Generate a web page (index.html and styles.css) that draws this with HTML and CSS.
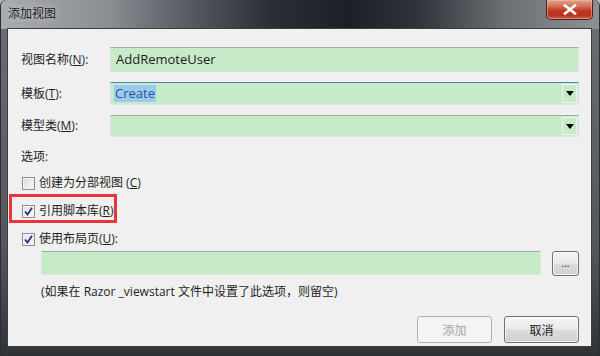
FILE: index.html
```html
<!DOCTYPE html>
<html>
<head>
<meta charset="utf-8">
<link rel="stylesheet" href="styles.css">
</head>
<body>
<div class="window">
  <div class="titlebar">
    <span class="title">添加视图</span>
    <div class="close">
      <svg width="14" height="11" viewBox="0 0 14 11"><path d="M2 1.5 L12 9.5 M12 1.5 L2 9.5" stroke="#fff" stroke-width="2.6" stroke-linecap="square" fill="none"/></svg>
    </div>
  </div>
  <div class="client">
    <div class="row row-name">
      <span class="label">视图名称(<u>N</u>):</span>
      <div class="textbox">AddRemoteUser</div>
    </div>
    <div class="row row-combo">
      <span class="label">模板(<u>T</u>):</span>
      <div class="combo focused">
        <span class="combo-text"><span class="sel">Create</span></span>
        <span class="drop"><svg width="8" height="5" viewBox="0 0 8 5"><path d="M0 0 H8 L4 5 Z" fill="#000"/></svg></span>
      </div>
    </div>
    <div class="row row-combo">
      <span class="label">模型类(<u>M</u>):</span>
      <div class="combo">
        <span class="combo-text"></span>
        <span class="drop"><svg width="8" height="5" viewBox="0 0 8 5"><path d="M0 0 H8 L4 5 Z" fill="#000"/></svg></span>
      </div>
    </div>
    <div class="line options-label">选项:</div>
    <div class="check-row cb1">
      <span class="cb"></span>
      <span class="cb-text">创建为分部视图 (<u>C</u>)</span>
    </div>
    <div class="check-row cb2 marked">
      <span class="cb checked"><svg width="9" height="9" viewBox="0 0 9 9"><path d="M1 4.5 L3.5 7.5 L8 0.8" stroke="#2b2e7a" stroke-width="1.8" fill="none"/></svg></span>
      <span class="cb-text">引用脚本库(<u>R</u>)</span>
    </div>
    <div class="check-row cb3">
      <span class="cb checked"><svg width="9" height="9" viewBox="0 0 9 9"><path d="M1 4.5 L3.5 7.5 L8 0.8" stroke="#2b2e7a" stroke-width="1.8" fill="none"/></svg></span>
      <span class="cb-text">使用布局页(<u>U</u>):</span>
    </div>
    <div class="layout-row">
      <div class="textbox layout-box"></div>
      <div class="btn browse">...</div>
    </div>
    <div class="line note">(如果在 Razor _viewstart 文件中设置了此选项，则留空)</div>
    <div class="buttons">
      <div class="btn action disabled">添加</div>
      <div class="btn action">取消</div>
    </div>
  </div>
</div>
</body>
</html>
```
FILE: styles.css
```css
html, body {
  margin: 0;
  padding: 0;
  background: #b9bcbf;
}
body {
  width: 600px;
  height: 356px;
  overflow: hidden;
  font-family: "Open Sans", "Noto Sans CJK SC", sans-serif;
  font-size: 12px;
  color: #1e1e1e;
}
.window {
  width: 600px;
  height: 356px;
  box-sizing: border-box;
  padding: 0 8px 9px 7px;
  background: linear-gradient(180deg, #6c7075 0%, #53575c 70%, #2f3338 100%);
  border-radius: 6px 6px 0 0;
  border: 1px solid #2a2d31;
  border-top: none;
  display: flex;
  flex-direction: column;
}
.titlebar {
  height: 29px;
  margin: 0 -8px 0 -7px;
  padding-left: 7px;
  display: flex;
  align-items: flex-start;
  justify-content: space-between;
  background: linear-gradient(90deg, #a9adb1 0%, #8a8e93 18%, #545960 32%, #2a2f36 45%, #1b2027 58%, #30353b 70%, #6a6f74 84%, #8d9195 100%);
  border-radius: 6px 6px 0 0;
}
.title {
  margin-top: 6px;
  font-size: 12px;
  line-height: 16px;
  color: #1b1b1b;
  text-shadow: 0 0 6px rgba(255,255,255,0.55);
}
.close {
  width: 47px;
  height: 20px;
  margin-right: 6px;
  box-sizing: border-box;
  border: 1px solid #4d2520;
  border-top: none;
  border-radius: 0 0 5px 5px;
  background: linear-gradient(180deg, #e2a592 0%, #d46a52 35%, #c03a22 55%, #b8321c 80%, #d0604a 100%);
  box-shadow: inset 0 0 0 1px rgba(255,200,190,0.45);
  display: flex;
  align-items: center;
  justify-content: center;
}
.client {
  flex: 1;
  background: #f0f0f0;
  box-shadow: 0 0 0 1px #3b3e42;
  padding: 18px 12px 0 13px;
  display: flex;
  flex-direction: column;
}
.row {
  display: flex;
  align-items: center;
}
.label {
  width: 89px;
  flex: none;
  line-height: 16px;
}
.textbox {
  flex: 1;
  height: 25px;
  box-sizing: border-box;
  background: #c7ebc8;
  border: 1px solid #dce6dc;
  border-top-color: #a3aaa3;
  padding-left: 5px;
  font-size: 13px;
  line-height: 23px;
  color: #1a1a1a;
}
.row-combo {
  margin-top: 10px;
}
.combo {
  flex: 1;
  height: 22px;
  box-sizing: border-box;
  background: #c7ebc8;
  border: 1px solid #dce6dc;
  border-top-color: #a3aaa3;
  display: flex;
  align-items: stretch;
}
.combo.focused {
  height: 23px;
  border-top-color: #4e85ad;
}
.combo-text {
  flex: 1;
  display: flex;
  align-items: center;
  padding-left: 3px;
  font-size: 13px;
}
.sel {
  background: #9ccaee;
  color: #1c5890;
  line-height: 17px;
  padding: 0 1px;
}
.drop {
  width: 15px;
  margin: 1px 1px 1px 0;
  box-sizing: border-box;
  border: 1px solid #eef6ee;
  display: flex;
  align-items: center;
  justify-content: center;
}
.line {
  line-height: 16px;
}
.options-label {
  margin-top: 12px;
}
.check-row {
  display: flex;
  align-items: center;
  height: 16px;
  margin-top: 12px;
  padding-left: 1px;
  position: relative;
}
.cb1 {
  margin-top: 10px;
}
.cb {
  width: 13px;
  height: 13px;
  box-sizing: border-box;
  border: 1px solid #8f8f8f;
  background: linear-gradient(135deg, #d6d6d6 0%, #eeeeee 60%, #fafafa 100%);
  box-shadow: inset 0 0 0 1px #f4f4f4;
  margin-right: 4px;
  display: flex;
  align-items: center;
  justify-content: center;
  flex: none;
}
.cb.checked {
  background: linear-gradient(135deg, #e4e4e4 0%, #f6f6f6 100%);
}
.cb-text {
  line-height: 16px;
}
.marked::before {
  content: "";
  position: absolute;
  left: -12px;
  top: -9px;
  width: 102px;
  height: 23px;
  border: 3px solid #e8343a;
}
.layout-row {
  display: flex;
  margin-top: 4px;
  padding-left: 20px;
  gap: 11px;
}
.layout-box {
  height: 24px;
}
.btn {
  box-sizing: border-box;
  border: 1px solid #707070;
  border-radius: 3px;
  background: linear-gradient(180deg, #f4f4f4 0%, #ebebeb 48%, #dddddd 52%, #cfcfcf 100%);
  box-shadow: inset 0 0 0 1px rgba(255,255,255,0.7);
  display: flex;
  align-items: center;
  justify-content: center;
  color: #1a1a1a;
}
.browse {
  width: 27px;
  height: 25px;
  font-size: 10px;
  line-height: 10px;
  padding-bottom: 2px;
}
.note {
  margin-top: 8px;
  padding-left: 20px;
}
.buttons {
  margin-top: 16px;
  display: flex;
  justify-content: flex-end;
  gap: 12px;
}
.action {
  width: 75px;
  height: 27px;
}
.action.disabled {
  border-color: #adb2b5;
  background: #f4f4f4;
  box-shadow: none;
  color: #a3a3a3;
}
```
